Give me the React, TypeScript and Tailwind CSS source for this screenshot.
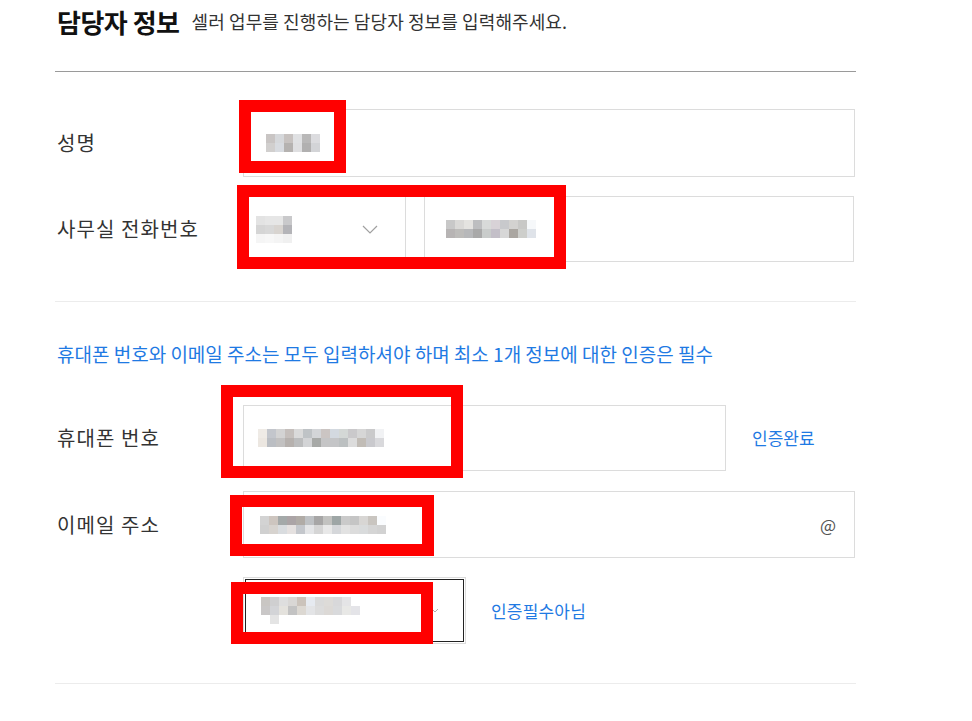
import React from "react";

const FONT = { fontFamily: '"Noto Sans CJK KR", "Noto Sans", sans-serif' };

type PixProps = { rows: string[][] };
function Pix({ rows }: PixProps) {
  return (
    <div className="flex flex-col">
      {rows.map((r, i) => (
        <div key={i} className="flex">
          {r.map((c, j) => (
            <div key={j} className="w-[9px] h-[9px]" style={{ backgroundColor: c }} />
          ))}
        </div>
      ))}
    </div>
  );
}

function Chevron({ className = "" }: { className?: string }) {
  return (
    <svg className={className} width="16" height="9" viewBox="0 0 16 9" fill="none">
      <polyline points="1,1 8,8 15,1" stroke="#a0a0a0" strokeWidth="1.2" />
    </svg>
  );
}

function RedBox({ cls }: { cls: string }) {
  return <div className={`absolute border-[12px] border-[#ff0000] ${cls}`} />;
}

export default function App() {
  return (
    <div className="relative w-[972px] h-[721px] overflow-hidden bg-white" style={FONT}>
      <div className="pl-[55px] w-[856px]">
        {/* header */}
        <div className="h-[72px] border-b border-[#9a9a9a]">
          <div className="h-[42px] flex items-center pl-[2px] gap-[12px]">
            <span className="text-[26px] font-bold text-[#111] tracking-[-0.5px]">담당자 정보</span>
            <span className="text-[18px] text-[#333] mt-[1px] tracking-[0.1px]">셀러 업무를 진행하는 담당자 정보를 입력해주세요.</span>
          </div>
        </div>

        {/* 성명 */}
        <div className="mt-[37px] flex items-center">
          <div className="w-[188px] pl-[2px] text-[20px] tracking-[1.1px] text-[#333]">성명</div>
          <div className="w-[612px] h-[68px] border border-[#dcdcdc] flex items-center pl-[22px]">
            <Pix
              rows={[
                ["#c9c5c4", "#d6d8db", "#c7c2c0", "#e0e1e3", "#b9b8b8", "#dcdcdf"],
                ["#d1cfce", "#d8dbe0", "#b5b2b0", "#dfdfe1", "#b1b0b0", "#d3d4d7"],
              ]}
            />
          </div>
        </div>

        {/* 사무실 전화번호 */}
        <div className="mt-[19px] flex items-center">
          <div className="w-[188px] pl-[2px] text-[20px] tracking-[1.1px] text-[#333]">사무실 전화번호</div>
          <div className="w-[163px] h-[66px] border border-[#dcdcdc] flex items-center justify-between pl-[12px] pr-[27px]">
            <Pix
              rows={[
                ["#e3e3e3", "#e6e6e6", "#e6e6e6", "#c9c9cb"],
                ["#d5d5d5", "#d8d8d8", "#d8d4d0", "#b4b4b8"],
                ["#f5f5f5", "#f7f7f7", "#f4f4f4", "#f0f0f0"],
              ]}
            />
            <Chevron />
          </div>
          <div className="ml-[18px] w-[430px] h-[66px] border border-[#dcdcdc] flex items-center pl-[21px]">
            <Pix
              rows={[
                ["#c8c8c8", "#dad9d7", "#e4e3e0", "#bdbec0", "#d8dad9", "#d8d2d7", "#c8c9cc", "#d3d2d0", "#c8c8c6", "#f6f8fa"],
                ["#b7b4b4", "#bdbcba", "#b7b8ba", "#a9a9a9", "#c9cccb", "#c3bfc8", "#d7d7d7", "#aaa6a1", "#cdcecb", "#dfe3e9"],
              ]}
            />
          </div>
        </div>

        <div className="mt-[39px] h-px bg-[#ececec]" />

        <div className="mt-[40px] h-[24px] flex items-center pl-[2px] text-[19px] text-[#1f7ae3] whitespace-nowrap">
          휴대폰 번호와 이메일 주소는 모두 입력하셔야 하며 최소 1개 정보에 대한 인증은 필수
        </div>

        {/* 휴대폰 번호 */}
        <div className="mt-[39px] flex items-center">
          <div className="w-[188px] pl-[2px] text-[20px] tracking-[1.1px] text-[#333]">휴대폰 번호</div>
          <div className="w-[483px] h-[66px] border border-[#dcdcdc] flex items-center pl-[14px]">
            <Pix
              rows={[
                ["#efebe6", "#c3c6cc", "#d3d3d3", "#c5bfbc", "#dadada", "#bfc3c6", "#d3d5d8", "#cbc5c3", "#d3d9e0", "#d4d8d6", "#cac9cb", "#d6d6d6", "#cacacb", "#f1f2f4"],
                ["#ece7e1", "#bbbec3", "#c2c1c1", "#b6b1ae", "#bcbdbe", "#d3d4d6", "#a7a9a7", "#c5c5c6", "#c4c5c7", "#bcc0c1", "#dcdcdc", "#c1bcb6", "#c9c9cd", "#d9d9dc"],
              ]}
            />
          </div>
          <div className="ml-[26px] text-[17px] text-[#1f7ae3]">인증완료</div>
        </div>

        {/* 이메일 주소 */}
        <div className="mt-[20px] flex items-center">
          <div className="w-[188px] pl-[2px] text-[20px] tracking-[1.1px] text-[#333]">이메일 주소</div>
          <div className="w-[612px] h-[67px] border border-[#dcdcdc] flex items-center justify-between pl-[16px] pr-[18px]">
            <Pix
              rows={[
                ["#d3d3d3", "#cdc5bf", "#a4a9a9", "#aba4a6", "#b0aba6", "#bec1c4", "#a7a6a6", "#c2c2c0", "#9ea6a6", "#cacaca", "#c5c5c5", "#d8d6d4", "#c9c5c0", "#fafcfe", "#ffffff"],
                ["#d0d0d0", "#d7d3cf", "#d9dcdf", "#e5e1e0", "#c4c7cc", "#e4e5e7", "#d5d5d5", "#e8e8e8", "#d5d7da", "#e2e2e2", "#dcdcdc", "#d9dbdc", "#d5d5d5", "#d2d2d2", "#ffffff"],
              ]}
            />
            <span className="text-[17px] text-[#555]">@</span>
          </div>
        </div>

        {/* 인증 select */}
        <div className="mt-[19px] flex items-center">
          <div className="w-[188px]" />
          <div className="w-[223px] h-[67px] border border-[#dcdcdc] p-px">
            <div className="w-full h-full border border-[#222] flex items-center justify-between pl-[15px] pr-[24px]">
              <Pix
                rows={[
                  ["#c9c6c3", "#cfcfd0", "#dedede", "#d9d7d5", "#cbc3bb", "#e6eaf0", "#dadada", "#dddbd8", "#d8d8da", "#e4e4e6", "#ffffff"],
                  ["#c9c7c7", "#d3d4d7", "#e4e2dd", "#c3c3c3", "#dcd8d2", "#e3e4e6", "#dcdcdc", "#dcd9d6", "#d9dadc", "#e8e8e6", "#e4e4e8"],
                  ["#ffffff", "#e4e4e4", "#ffffff", "#ffffff", "#ffffff", "#ffffff", "#ffffff", "#ffffff", "#ffffff", "#ffffff", "#ffffff"],
                ]}
              />
              <svg width="8" height="5" viewBox="0 0 8 5" fill="none">
                <polyline points="1,1 4,4 7,1" stroke="#b0b0b0" strokeWidth="1" />
              </svg>
            </div>
          </div>
          <div className="ml-[25px] text-[17px] text-[#1f7ae3] tracking-[0.2px]">인증필수아님</div>
        </div>

        <div className="mt-[39px] h-px bg-[#ececec]" />
      </div>

      {/* red annotation boxes */}
      <RedBox cls="left-[239px] top-[100px] w-[107px] h-[73px]" />
      <RedBox cls="left-[237px] top-[185px] w-[329px] h-[84px]" />
      <RedBox cls="left-[221px] top-[385px] w-[242px] h-[93px]" />
      <RedBox cls="left-[230px] top-[495px] w-[204px] h-[61px]" />
      <RedBox cls="left-[231px] top-[582px] w-[202px] h-[62px]" />
    </div>
  );
}
